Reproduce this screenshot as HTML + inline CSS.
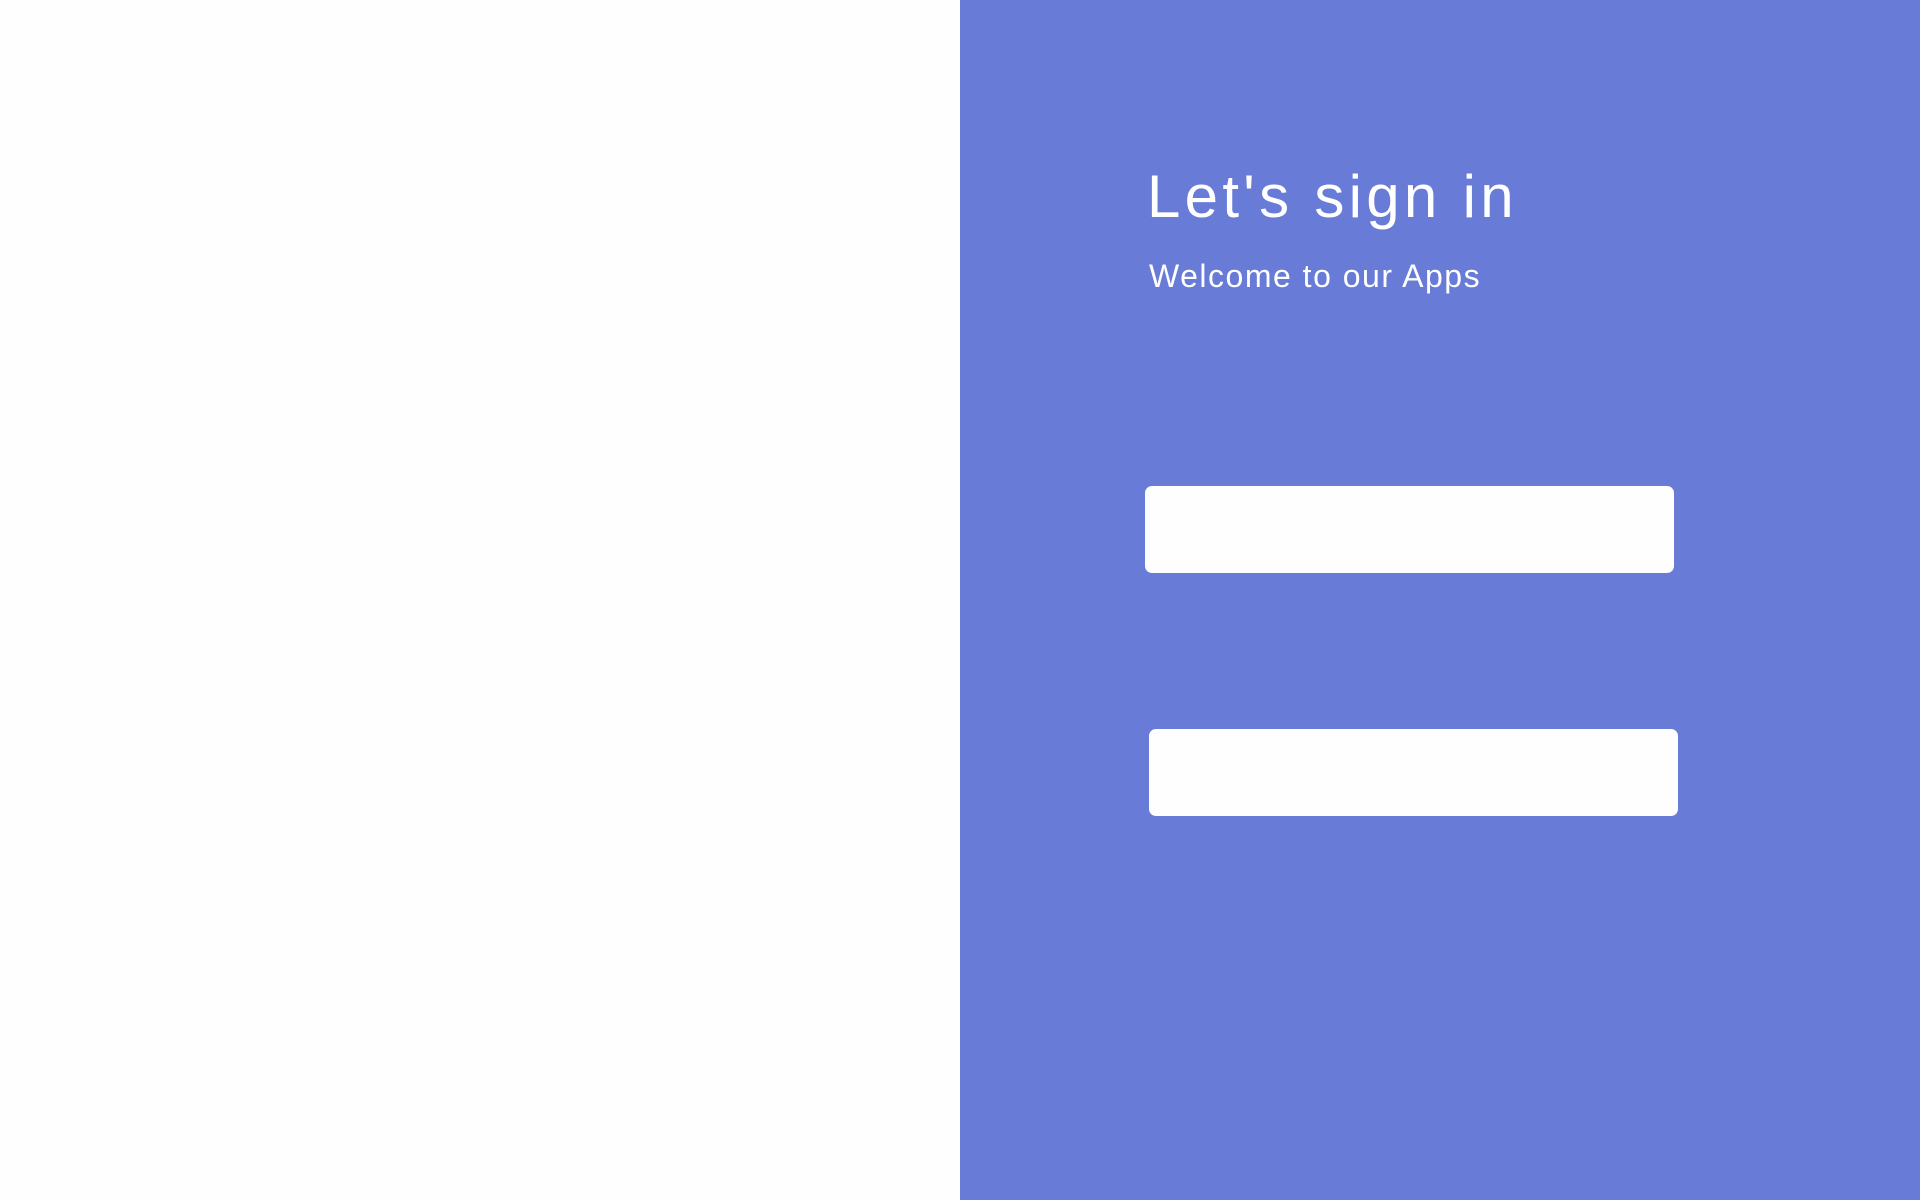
<!DOCTYPE html>
<html><head><meta charset="utf-8"><style>
html,body{margin:0;padding:0;width:1920px;height:1200px;overflow:hidden;background:#fefefe;font-family:"Liberation Sans",sans-serif}
.right{position:absolute;left:960px;top:0;width:960px;height:1200px;background:#677bd7}
.t{position:absolute;left:1147px;top:167px;font-size:60px;letter-spacing:4.3px;color:#fff;line-height:1;white-space:nowrap}
.s{position:absolute;left:1149px;top:260px;font-size:32px;letter-spacing:1.5px;color:#fff;line-height:1;white-space:nowrap}
.in{position:absolute;background:#fefefe;border-radius:7px;width:529px;height:87px}
</style></head><body>
<div class="right"></div>
<div class="t">Let's sign in</div>
<div class="s">Welcome to our Apps</div>
<div class="in" style="left:1145px;top:486px"></div>
<div class="in" style="left:1149px;top:729px"></div>
</body></html>
